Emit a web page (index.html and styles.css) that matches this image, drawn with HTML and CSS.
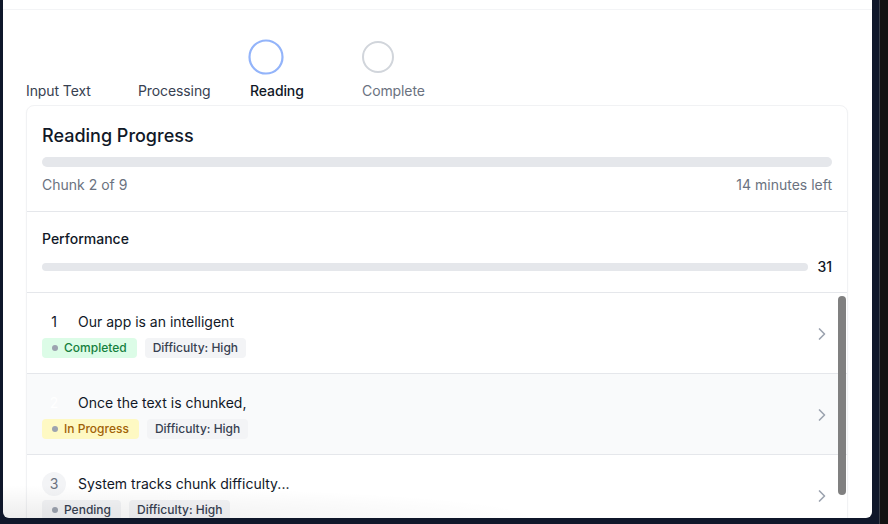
FILE: index.html
```html
<!DOCTYPE html>
<html lang="en">
<head>
<meta charset="utf-8">
<title>Reading Progress</title>
<link rel="stylesheet" href="styles.css">
</head>
<body>
<div class="frame">
  <div class="stage">
    <div class="panel">
      <div class="topbar"></div>
      <div class="content">
        <div class="stepper">
          <div class="step done">
            <span class="step-circle"></span>
            <span class="step-label">Input Text</span>
          </div>
          <div class="step done">
            <span class="step-circle"></span>
            <span class="step-label">Processing</span>
          </div>
          <div class="step current">
            <span class="step-circle"></span>
            <span class="step-label">Reading</span>
          </div>
          <div class="step upcoming">
            <span class="step-circle"></span>
            <span class="step-label">Complete</span>
          </div>
        </div>

        <div class="card">
          <section class="card-section progress-section">
            <h2 class="card-title">Reading Progress</h2>
            <div class="bar bar-thick"><div class="bar-fill" style="width:0%"></div></div>
            <div class="progress-meta">
              <span>Chunk 2 of 9</span>
              <span>14 minutes left</span>
            </div>
          </section>

          <section class="card-section perf-section">
            <h3 class="perf-title">Performance</h3>
            <div class="perf-row">
              <div class="bar bar-thin"><div class="bar-fill" style="width:0%"></div></div>
              <span class="perf-value">31</span>
            </div>
          </section>

          <div class="chunk-list">
            <div class="chunk">
              <div class="chunk-body">
                <div class="chunk-head">
                  <span class="num num-done">1</span>
                  <span class="chunk-title">Our app is an intelligent</span>
                </div>
                <div class="badges">
                  <span class="badge status status-done"><i class="dot"></i>Completed</span>
                  <span class="badge diff">Difficulty: High</span>
                </div>
              </div>
              <svg class="chev" viewBox="0 0 24 24" width="20" height="20" fill="none" stroke="currentColor" stroke-width="2" stroke-linecap="round" stroke-linejoin="round"><path d="m9 18 6-6-6-6"/></svg>
            </div>
            <div class="chunk active">
              <div class="chunk-body">
                <div class="chunk-head">
                  <span class="num num-active">2</span>
                  <span class="chunk-title">Once the text is chunked,</span>
                </div>
                <div class="badges">
                  <span class="badge status status-progress"><i class="dot"></i>In Progress</span>
                  <span class="badge diff">Difficulty: High</span>
                </div>
              </div>
              <svg class="chev" viewBox="0 0 24 24" width="20" height="20" fill="none" stroke="currentColor" stroke-width="2" stroke-linecap="round" stroke-linejoin="round"><path d="m9 18 6-6-6-6"/></svg>
            </div>
            <div class="chunk">
              <div class="chunk-body">
                <div class="chunk-head">
                  <span class="num num-pending">3</span>
                  <span class="chunk-title">System tracks chunk difficulty...</span>
                </div>
                <div class="badges">
                  <span class="badge status status-pending"><i class="dot"></i>Pending</span>
                  <span class="badge diff">Difficulty: High</span>
                </div>
              </div>
              <svg class="chev" viewBox="0 0 24 24" width="20" height="20" fill="none" stroke="currentColor" stroke-width="2" stroke-linecap="round" stroke-linejoin="round"><path d="m9 18 6-6-6-6"/></svg>
            </div>
            <div class="scroll-thumb"></div>
          </div>
        </div>
      </div>
      <div class="bottom-shade"></div>
    </div>
  </div>
  <div class="divider-line"></div>
  <div class="gutter"></div>
</div>
</body>
</html>
```

FILE: styles.css
```css
* { box-sizing: border-box; }

html, body {
  margin: 0;
  padding: 0;
  height: 524px;
  overflow: hidden;
  background: #0f172a;
  font-family: Inter, "Noto Sans", "Liberation Sans", sans-serif;
  color: #111827;
}

.frame {
  display: flex;
  height: 524px;
}

.stage {
  width: 879px;
  padding-left: 3px;
  padding-right: 7px;
  background: #0f172a;
}

.divider-line {
  width: 1px;
  background: #3a3f4a;
}

.gutter {
  width: 8px;
  background: #121212;
}

.panel {
  position: relative;
  height: 518px;
  background: #ffffff;
  border-radius: 0 0 6px 6px;
  overflow: hidden;
}

.topbar {
  height: 10px;
  border-bottom: 1px solid #f3f4f6;
}

.content {
  padding: 0 24px 0 23px;
}

/* Stepper */
.stepper {
  display: flex;
  padding-top: 31px;
}

.step {
  width: 112px;
  display: flex;
  flex-direction: column;
  align-items: flex-start;
  gap: 8px;
}

.step-circle {
  width: 32px;
  height: 32px;
  border-radius: 50%;
  border: 2px solid #ffffff;
  background: #ffffff;
}

.step.current .step-circle {
  border-color: #93b4fa;
  transform: scale(1.1);
}

.step.upcoming .step-circle {
  border-color: #d1d5db;
}

.step-label {
  font-size: 14px;
  line-height: 20px;
  color: #374151;
  letter-spacing: -0.1px;
}

.step.current .step-label {
  color: #111827;
  font-weight: 500;
}

.step.upcoming .step-label {
  color: #6b7280;
}

/* Card */
.card {
  margin-top: 4px;
  border: 1px solid #f1f2f4;
  border-radius: 8px;
  background: #fff;
  box-shadow: 0 1px 2px rgba(0, 0, 0, 0.04);
}

.card-section {
  border-bottom: 1px solid #e5e7eb;
}

.progress-section {
  padding: 16px 15px 16px 15px;
}

.perf-section {
  padding: 17px 15px 15px 15px;
}

.card-title {
  margin: 0;
  font-size: 18px;
  line-height: 28px;
  font-weight: 500;
  color: #111827;
}

.bar {
  background: #e5e7eb;
  border-radius: 999px;
  overflow: hidden;
}

.bar-fill {
  height: 100%;
  background: #3b82f6;
}

.bar-thick {
  height: 10px;
  margin-top: 7px;
}

.progress-meta {
  display: flex;
  justify-content: space-between;
  margin-top: 8px;
  font-size: 14px;
  line-height: 20px;
  color: #6b7280;
}

.perf-title {
  margin: 0;
  font-size: 14px;
  line-height: 20px;
  font-weight: 500;
  color: #111827;
}

.perf-row {
  display: flex;
  align-items: center;
  gap: 9px;
  margin-top: 8px;
  height: 20px;
}

.bar-thin {
  flex: 1;
  height: 8px;
}

.perf-value {
  font-size: 14px;
  line-height: 20px;
  font-weight: 500;
  color: #111827;
}

/* Chunk list */
.chunk-list {
  position: relative;
}

.chunk {
  display: flex;
  align-items: center;
  padding: 17px 15px 15px 15px;
  border-bottom: 1px solid #e5e7eb;
}

.chunk.active {
  background: #f9fafb;
}

.chunk-body {
  flex: 1;
}

.chunk-head {
  display: flex;
  align-items: center;
  gap: 12px;
}

.num {
  width: 24px;
  height: 24px;
  border-radius: 50%;
  display: flex;
  align-items: center;
  justify-content: center;
  font-size: 14px;
  line-height: 20px;
}

.num-done {
  background: #ffffff;
  color: #111827;
}

.num-active {
  background: #f9fafb;
  color: #ffffff;
}

.num-pending {
  background: #f3f4f6;
  color: #6b7280;
}

.chunk-title {
  font-size: 14px;
  line-height: 24px;
  color: #111827;
}

.badges {
  display: flex;
  gap: 8px;
  margin-top: 4px;
}

.badge {
  display: inline-flex;
  align-items: center;
  height: 20px;
  padding: 0 8px;
  border-radius: 4px;
  font-size: 12px;
  font-weight: 500;
  line-height: 16px;
}

.badge.status {
  padding: 0 10px;
}

.dot {
  width: 6px;
  height: 6px;
  border-radius: 50%;
  background: #9ca3af;
  margin-right: 6px;
}

.status-done {
  background: #dcfce7;
  color: #15803d;
}

.status-progress {
  background: #fef9c3;
  color: #a16207;
}

.status-pending {
  background: #f3f4f6;
  color: #374151;
}

.diff {
  background: #f3f4f6;
  color: #374151;
}

.chev {
  color: #9ca3af;
  flex-shrink: 0;
}

.scroll-thumb {
  position: absolute;
  top: 3px;
  right: 1px;
  width: 8px;
  height: 199px;
  border-radius: 4px;
  background: #808080;
}

.bottom-shade {
  position: absolute;
  left: 0;
  bottom: 0;
  width: 720px;
  height: 44px;
  pointer-events: none;
  background: radial-gradient(ellipse 100% 100% at 0% 100%, rgba(0, 0, 0, 0.07), rgba(0, 0, 0, 0) 75%);
}
```
